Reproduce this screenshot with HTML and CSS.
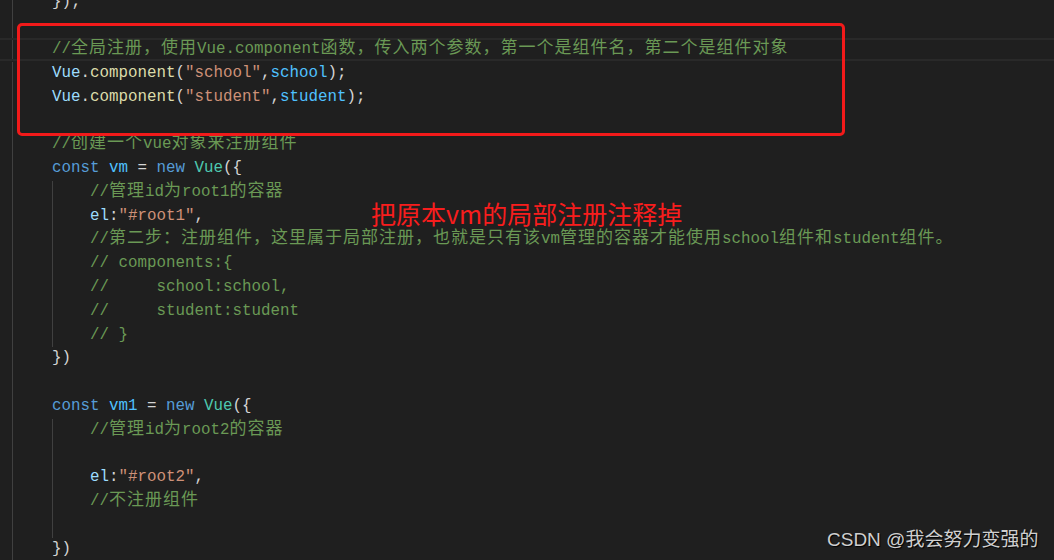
FILE: index.html
```html
<!DOCTYPE html>
<html lang="zh">
<head>
<meta charset="utf-8">
<title>Vue 全局注册</title>
<link rel="stylesheet" href="styles.css">
</head>
<body>
<div class="editor">
  <div class="code">
    <div class="line">});</div>
    <div class="line"></div>
    <div class="line cur"><span class="cm">//<span class="k">全局注册，使用</span>Vue.component<span class="k">函数，传入两个参数，第一个是组件名，第二个是组件对象</span></span></div>
    <div class="line"><span class="var">Vue</span>.<span class="fn">component</span>(<span class="str">"school"</span>,<span class="const">school</span>);</div>
    <div class="line"><span class="var">Vue</span>.<span class="fn">component</span>(<span class="str">"student"</span>,<span class="const">student</span>);</div>
    <div class="line"></div>
    <div class="line"><span class="cm">//<span class="k">创建一个</span>vue<span class="k">对象来注册组件</span></span></div>
    <div class="line"><span class="kw">const</span> <span class="const">vm</span> = <span class="kw">new</span> <span class="cls">Vue</span>({</div>
    <div class="line guide">    <span class="cm">//<span class="k">管理</span>id<span class="k">为</span>root1<span class="k">的容器</span></span></div>
    <div class="line guide">    <span class="var">el</span>:<span class="str">"#root1"</span>,</div>
    <div class="line guide">    <span class="cm">//<span class="k">第二步：注册组件，这里属于局部注册，也就是只有该</span>vm<span class="k">管理的容器才能使用</span>school<span class="k">组件和</span>student<span class="k">组件。</span></span></div>
    <div class="line guide">    <span class="cm">// components:{</span></div>
    <div class="line guide">    <span class="cm">//     school:school,</span></div>
    <div class="line guide">    <span class="cm">//     student:student</span></div>
    <div class="line guide">    <span class="cm">// }</span></div>
    <div class="line">})</div>
    <div class="line"></div>
    <div class="line"><span class="kw">const</span> <span class="const">vm1</span> = <span class="kw">new</span> <span class="cls">Vue</span>({</div>
    <div class="line guide">    <span class="cm">//<span class="k">管理</span>id<span class="k">为</span>root2<span class="k">的容器</span></span></div>
    <div class="line guide"></div>
    <div class="line guide">    <span class="var">el</span>:<span class="str">"#root2"</span>,</div>
    <div class="line guide">    <span class="cm">//<span class="k">不注册组件</span></span></div>
    <div class="line guide"></div>
    <div class="line">})</div>
  </div>
  <div class="box"></div>
  <div class="note">把原本vm的局部注册注释掉</div>
  <div class="mark">CSDN @我会努力变强的</div>
</div>
</body>
</html>
```
FILE: styles.css
```css
html, body {
  margin: 0;
  padding: 0;
  background: #1f1f1f;
}

.editor {
  position: relative;
  width: 1054px;
  height: 560px;
  overflow: hidden;
  background: #1f1f1f linear-gradient(#404040, #404040) 12px 0 / 1px 100% no-repeat;
}

.code {
  margin-top: -9.5px;
  font-family: "Liberation Mono", "Noto Sans CJK SC", monospace;
  font-size: 15.83px;
  color: #d4d4d4;
}

.line {
  height: 23.8px;
  line-height: 23.8px;
  padding-left: 52px;
  white-space: pre;
}

.line.cur {
  margin-top: 0;
  box-shadow: inset 0 -1px #1f1f1f, inset 0 2px #292929, inset 0 -3px #292929;
}

.line.guide {
  background: linear-gradient(#404040, #404040) 52px 0 / 1px 100% no-repeat;
}

.k {
  font-family: "Noto Sans CJK SC", sans-serif;
  font-size: 17px;
  letter-spacing: 1px;
  line-height: 0;
}

.cm { color: #6a9955; }
.kw { color: #569cd6; }
.cls { color: #4ec9b0; }
.var { color: #9cdcfe; }
.const { color: #4fc1ff; }
.fn { color: #dcdcaa; }
.str { color: #ce9178; }

.box {
  position: absolute;
  left: 17px;
  top: 23px;
  width: 822px;
  height: 107px;
  border: 3px solid #f21a1a;
  border-radius: 5px;
}

.note {
  position: absolute;
  left: 371px;
  top: 198px;
  font-family: "Noto Sans CJK SC", sans-serif;
  font-size: 25px;
  line-height: 30px;
  color: #f81d1d;
  white-space: nowrap;
}

.mark {
  position: absolute;
  left: 827px;
  top: 527px;
  font-family: "Liberation Sans", "Noto Sans CJK SC", sans-serif;
  font-size: 19px;
  line-height: 26px;
  color: #cfcfcf;
  text-shadow: 1px 1px 1px #000;
  white-space: nowrap;
}
```
